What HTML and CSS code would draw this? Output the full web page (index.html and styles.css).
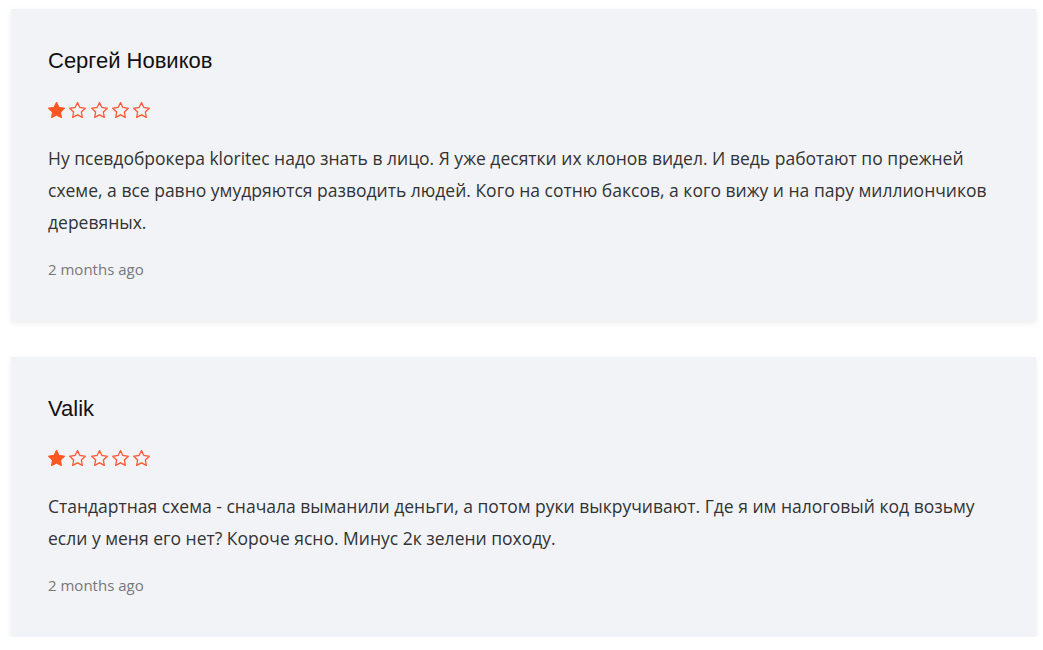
FILE: index.html
```html
<!DOCTYPE html>
<html lang="ru">
<head>
<meta charset="utf-8">
<title>Reviews</title>
<link rel="stylesheet" href="styles.css">
</head>
<body>
<div class="reviews">
  <article class="card">
    <h3 class="name">Сергей Новиков</h3>
    <div class="stars">
      <svg class="star filled" viewBox="1.2 1.2 21.6 20.6"><polygon points="12,2 15.09,8.26 22,9.27 17,14.14 18.18,21.02 12,17.77 5.82,21.02 7,14.14 2,9.27 8.91,8.26"/></svg>
      <svg class="star" viewBox="1.2 1.2 21.6 20.6"><polygon points="12,2 15.09,8.26 22,9.27 17,14.14 18.18,21.02 12,17.77 5.82,21.02 7,14.14 2,9.27 8.91,8.26"/></svg>
      <svg class="star" viewBox="1.2 1.2 21.6 20.6"><polygon points="12,2 15.09,8.26 22,9.27 17,14.14 18.18,21.02 12,17.77 5.82,21.02 7,14.14 2,9.27 8.91,8.26"/></svg>
      <svg class="star" viewBox="1.2 1.2 21.6 20.6"><polygon points="12,2 15.09,8.26 22,9.27 17,14.14 18.18,21.02 12,17.77 5.82,21.02 7,14.14 2,9.27 8.91,8.26"/></svg>
      <svg class="star" viewBox="1.2 1.2 21.6 20.6"><polygon points="12,2 15.09,8.26 22,9.27 17,14.14 18.18,21.02 12,17.77 5.82,21.02 7,14.14 2,9.27 8.91,8.26"/></svg>
    </div>
    <p class="text">Ну псевдоброкера kloritec надо знать в лицо. Я уже десятки их клонов видел. И ведь работают по прежней схеме, а все равно умудряются разводить людей. Кого на сотню баксов, а кого вижу и на пару миллиончиков деревяных.</p>
    <div class="date">2 months ago</div>
  </article>
  <article class="card">
    <h3 class="name">Valik</h3>
    <div class="stars">
      <svg class="star filled" viewBox="1.2 1.2 21.6 20.6"><polygon points="12,2 15.09,8.26 22,9.27 17,14.14 18.18,21.02 12,17.77 5.82,21.02 7,14.14 2,9.27 8.91,8.26"/></svg>
      <svg class="star" viewBox="1.2 1.2 21.6 20.6"><polygon points="12,2 15.09,8.26 22,9.27 17,14.14 18.18,21.02 12,17.77 5.82,21.02 7,14.14 2,9.27 8.91,8.26"/></svg>
      <svg class="star" viewBox="1.2 1.2 21.6 20.6"><polygon points="12,2 15.09,8.26 22,9.27 17,14.14 18.18,21.02 12,17.77 5.82,21.02 7,14.14 2,9.27 8.91,8.26"/></svg>
      <svg class="star" viewBox="1.2 1.2 21.6 20.6"><polygon points="12,2 15.09,8.26 22,9.27 17,14.14 18.18,21.02 12,17.77 5.82,21.02 7,14.14 2,9.27 8.91,8.26"/></svg>
      <svg class="star" viewBox="1.2 1.2 21.6 20.6"><polygon points="12,2 15.09,8.26 22,9.27 17,14.14 18.18,21.02 12,17.77 5.82,21.02 7,14.14 2,9.27 8.91,8.26"/></svg>
    </div>
    <p class="text">Стандартная схема - сначала выманили деньги, а потом руки выкручивают. Где я им налоговый код возьму если у меня его нет? Короче ясно. Минус 2к зелени походу.</p>
    <div class="date">2 months ago</div>
  </article>
</div>
</body>
</html>
```
FILE: styles.css
```css
html, body {
  margin: 0;
  padding: 0;
  background: #ffffff;
}
body {
  font-family: "Open Sans", "Liberation Sans", sans-serif;
}
.reviews {
  display: flex;
  flex-direction: column;
  gap: 36px;
  padding: 9px 7px 0 11px;
}
.card {
  background: #f2f3f7;
  box-shadow: 0 2px 6px rgba(0, 0, 0, 0.08);
  padding: 39px 37px 42px 37px;
}
.name {
  margin: 0;
  font-family: "Liberation Sans", Arial, sans-serif;
  font-weight: 400;
  font-size: 22px;
  line-height: 26px;
  color: #111111;
}
.stars {
  display: flex;
  gap: 4.3px;
  margin-top: 26px;
  height: 20px;
  align-items: center;
}
.star {
  width: 17px;
  height: 16px;
  display: block;
}
.star polygon {
  fill: none;
  stroke: #ff5a36;
  stroke-width: 1.7;
  stroke-linejoin: miter;
}
.star.filled polygon {
  fill: #ff5722;
  stroke: #ff5722;
}
.text {
  margin: 22px 0 0;
  font-size: 17.5px;
  line-height: 32px;
  color: #333333;
}
.date {
  margin-top: 21px;
  font-size: 15px;
  line-height: 20px;
  color: #777777;
}
```
